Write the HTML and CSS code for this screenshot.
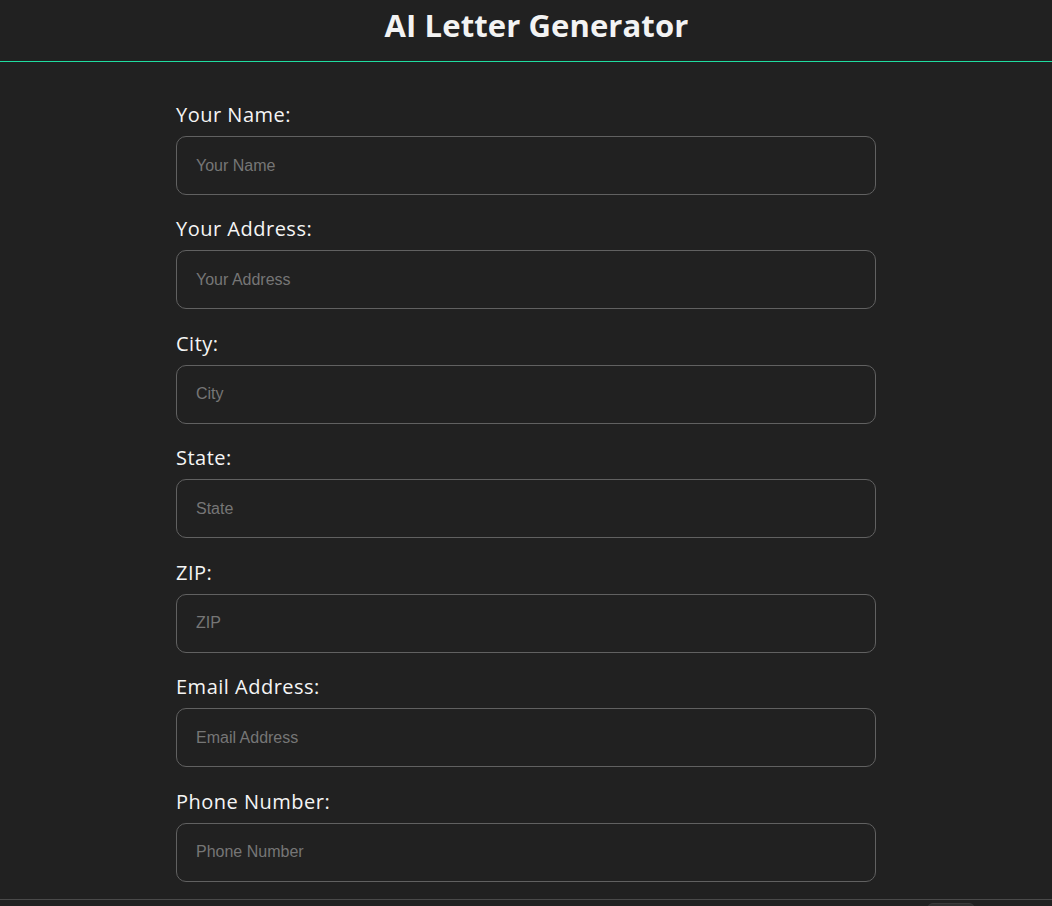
FILE: index.html
```html
<!DOCTYPE html>
<html lang="en">
<head>
<meta charset="utf-8">
<title>AI Letter Generator</title>
<link rel="stylesheet" href="styles.css">
</head>
<body>
<header class="site-header">
  <h1 class="title">AI Letter Generator</h1>
</header>
<main class="content">
  <form class="letter-form">
    <div class="field">
      <label class="field-label" for="name">Your Name:</label>
      <input class="field-input" id="name" type="text" placeholder="Your Name">
    </div>
    <div class="field">
      <label class="field-label" for="address">Your Address:</label>
      <input class="field-input" id="address" type="text" placeholder="Your Address">
    </div>
    <div class="field">
      <label class="field-label" for="city">City:</label>
      <input class="field-input" id="city" type="text" placeholder="City">
    </div>
    <div class="field">
      <label class="field-label" for="state">State:</label>
      <input class="field-input" id="state" type="text" placeholder="State">
    </div>
    <div class="field">
      <label class="field-label" for="zip">ZIP:</label>
      <input class="field-input" id="zip" type="text" placeholder="ZIP">
    </div>
    <div class="field">
      <label class="field-label" for="email">Email Address:</label>
      <input class="field-input" id="email" type="text" placeholder="Email Address">
    </div>
    <div class="field">
      <label class="field-label" for="phone">Phone Number:</label>
      <input class="field-input" id="phone" type="text" placeholder="Phone Number">
    </div>
  </form>
  <section class="next-section">
    <div class="next-row">
      <button class="small-btn" type="button"></button>
    </div>
  </section>
</main>
</body>
</html>
```
FILE: styles.css
```css
html, body {
  margin: 0;
  padding: 0;
  background: #212121;
  color: #f2f2f2;
  font-family: "Open Sans", "DejaVu Sans", sans-serif;
}
.site-header {
  height: 61px;
  border-bottom: 1px solid #1fdca0;
  display: flex;
  justify-content: center;
  padding-left: 21px;
}
.title {
  margin: 0;
  font-size: 31px;
  line-height: 50px;
  font-weight: 700;
  color: #f3f3f3;
  letter-spacing: 0.1px;
}
.content {
  display: flex;
  flex-direction: column;
}
.letter-form {
  width: 700px;
  margin: 0 auto;
  padding-top: 38px;
  display: flex;
  flex-direction: column;
  gap: 19.45px;
}
.field {
  display: flex;
  flex-direction: column;
  gap: 6px;
}
.field-label {
  font-size: 20px;
  line-height: 30px;
  font-weight: 500;
  color: #f5f5f5;
  letter-spacing: 0.5px;
}
.field-input {
  box-sizing: border-box;
  height: 59px;
  width: 100%;
  padding: 0 19px;
  background: #212121;
  border: 1px solid #616161;
  border-radius: 10px;
  color: #eee;
  font-family: "Liberation Sans", Arial, sans-serif;
  font-size: 16px;
  outline: none;
}
.field-input::placeholder {
  color: #767676;
}
.next-section {
  margin-top: 17px;
  border-top: 1px solid #4a4a4a;
}
.next-row {
  display: flex;
  justify-content: flex-end;
  padding: 3px 77px 0 0;
}
.small-btn {
  width: 48px;
  height: 30px;
  border: 1px solid #3a3a3a;
  border-radius: 6px;
  background: #303030;
  padding: 0;
}
```
